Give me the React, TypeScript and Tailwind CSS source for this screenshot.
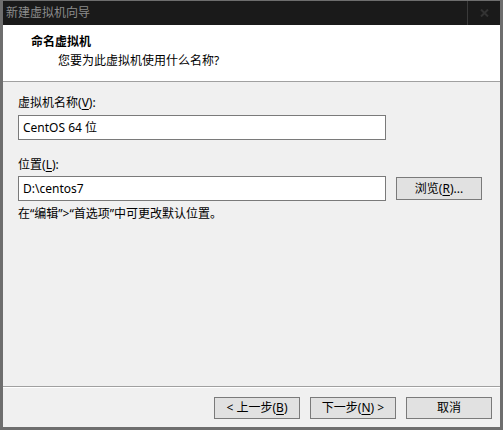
const FONT = "font-['Segoe_UI','Noto_Sans','Noto_Sans_CJK_SC',sans-serif]";

function Mnemonic({ k }: { k: string }) {
  return (
    <>
      (<span className="underline underline-offset-2">{k}</span>)
    </>
  );
}

function Button({ children, className = '' }: { children: React.ReactNode; className?: string }) {
  return (
    <button
      className={`h-[22px] w-[86px] bg-[#e1e1e1] border border-[#7a7a7a] text-[12px] leading-none text-black flex items-center justify-center ${className}`}
    >
      {children}
    </button>
  );
}

export default function App() {
  return (
    <div className={`w-[503px] h-[430px] bg-[#6e6e6e] p-[3px] pt-px flex flex-col ${FONT}`}>
      {/* Title bar */}
      <div className="h-[24px] bg-[#1a1a1a] flex items-center shrink-0">
        <span className="pl-[3px] text-[12px] text-[#8c8c8c]">新建虚拟机向导</span>
        <div className="ml-auto h-full w-[33px] border-l border-[#3a3a3a] flex items-center justify-center">
          <svg width="9" height="8" viewBox="0 0 9 8" aria-hidden="true">
            <path d="M1 0.5 L8 7.5 M8 0.5 L1 7.5" stroke="#333" strokeWidth="2" />
          </svg>
        </div>
      </div>

      {/* Header */}
      <div className="h-[57px] bg-white border-b border-[#a0a0a0] pl-[28px] pt-[9px] shrink-0">
        <p className="text-[12px] font-bold text-black leading-[16px]">命名虚拟机</p>
        <p className="text-[12px] text-black leading-[16px] pl-[27px] mt-[3px]">您要为此虚拟机使用什么名称?</p>
      </div>

      {/* Body */}
      <div className="flex-1 bg-[#f0f0f0] border-b border-[#a0a0a0] px-[15px] pt-[13px] text-[12px] text-black">
        <label className="block leading-[16px]">
          虚拟机名称<Mnemonic k="V" />:
        </label>
        <div className="mt-[4px] h-[25px] w-[368px] bg-white border border-[#7a7a7a] flex items-center px-[4px]">
          CentOS 64 位
        </div>

        <label className="block leading-[16px] mt-[17px]">
          位置<Mnemonic k="L" />:
        </label>
        <div className="mt-[3px] flex items-center gap-[10px]">
          <div className="h-[25px] w-[368px] bg-white border border-[#7a7a7a] flex items-center px-[4px]">
            D:\centos7
          </div>
          <Button className="h-[23px]">
            浏览<Mnemonic k="R" />...
          </Button>
        </div>
        <p className="mt-[5px] leading-[16px]">在“编辑”&gt;“首选项”中可更改默认位置。</p>
      </div>

      {/* Footer */}
      <div className="h-[40px] bg-[#f0f0f0] border-t border-white flex items-center justify-end gap-[10px] pr-[8px] shrink-0">
        <Button>
          &lt; 上一步<Mnemonic k="B" />
        </Button>
        <Button>
          下一步<Mnemonic k="N" /> &gt;
        </Button>
        <Button>取消</Button>
      </div>
    </div>
  );
}
